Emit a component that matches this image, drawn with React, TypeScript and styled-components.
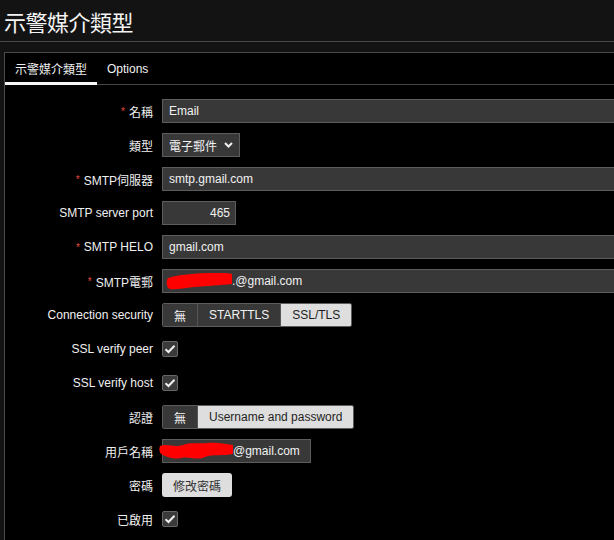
import React from 'react';
import styled, { createGlobalStyle } from 'styled-components';

const GlobalStyle = createGlobalStyle`
  html, body {
    margin: 0;
    background: #131313;
    overflow: hidden;
  }
  body {
    font-family: "Liberation Sans", Arial, "Noto Sans CJK TC", sans-serif;
    font-size: 12px;
    color: #f2f2f2;
  }
`;

const Header = styled.header`
  height: 41px;
  border-bottom: 1px solid #474747;
  display: flex;
  align-items: center;
  padding-left: 4px;
`;

const Title = styled.h1`
  margin: 0;
  font-size: 22px;
  font-weight: 400;
  color: #f4f4f4;
  font-family: "Noto Sans CJK TC", "Liberation Sans", sans-serif;
  letter-spacing: -0.5px;
`;

const Wrap = styled.div`
  padding: 10px 0 0 4px;
`;

const Panel = styled.section`
  height: calc(100vh - 53px);
  overflow: hidden;
  background: #000;
  border-top: 1px solid #4a4a4a;
  border-left: 1px solid #4a4a4a;
`;

const Tabs = styled.nav`
  display: flex;
  height: 31px;
  border-bottom: 1px solid #444;
`;

const Tab = styled.div<{ $active?: boolean }>`
  display: flex;
  align-items: center;
  padding: 2px 10px 0;
  margin-bottom: -1px;
  border-bottom: 3px solid ${p => (p.$active ? '#f5f5f5' : 'transparent')};
  color: #f2f2f2;
  font-size: 12px;
`;

const Form = styled.div`
  display: grid;
  grid-template-columns: 148px 1fr;
  column-gap: 9px;
  row-gap: 10px;
  padding-top: 14px;
  grid-auto-rows: 24px;
`;

const Label = styled.label`
  display: flex;
  align-items: center;
  justify-content: flex-end;
  white-space: nowrap;
  color: #f0f0f0;
`;

const Star = styled.span`
  color: #e5483d;
  font-size: 10px;
  margin-right: 4px;
`;

const Cell = styled.div`
  display: flex;
  align-items: center;
  min-width: 0;
`;

const Field = styled.div<{ $width?: number; $right?: boolean }>`
  box-sizing: border-box;
  flex: none;
  height: 24px;
  width: ${p => (p.$width ? `${p.$width}px` : '500px')};
  background: #383838;
  border: 1px solid #5c5c5c;
  display: flex;
  align-items: center;
  justify-content: ${p => (p.$right ? 'flex-end' : 'flex-start')};
  padding: 0 ${p => (p.$right ? '5px' : '6px')};
  color: #f2f2f2;
  font-size: 12px;
  white-space: nowrap;
`;

const Select = styled(Field)`
  padding-right: 6px;
  justify-content: space-between;
`;

const Segments = styled.div`
  display: flex;
  height: 24px;
  box-sizing: border-box;
  border: 1px solid #5c5c5c;
  border-radius: 2px;
  overflow: hidden;
`;

const Segment = styled.div<{ $on?: boolean }>`
  display: flex;
  align-items: center;
  padding: 0 11px;
  background: ${p => (p.$on ? '#dedede' : '#383838')};
  color: ${p => (p.$on ? '#1e1e1e' : '#f2f2f2')};
  & + & {
    border-left: 1px solid #555;
  }
`;

const Check = styled.div`
  width: 16px;
  height: 16px;
  box-sizing: border-box;
  background: #3a3a3a;
  border: 1px solid #666;
  border-radius: 2px;
  display: flex;
  align-items: center;
  justify-content: center;
`;

const Button = styled.div`
  height: 24px;
  display: flex;
  align-items: center;
  padding: 0 11px;
  background: #dedede;
  color: #333;
  border-radius: 3px;
`;

const Redact = styled.svg<{ $shift?: number }>`
  flex: none;
  margin-left: ${p => p.$shift ?? 0}px;
`;

const Tick = () => (
  <svg width="12" height="10" viewBox="0 0 12 10">
    <path d="M1.5 5.2 L4.5 8 L10.5 1.8" fill="none" stroke="#f0f0f0" strokeWidth="2" />
  </svg>
);

const Chevron = () => (
  <svg width="9" height="6" viewBox="0 0 9 6">
    <path d="M1 1 L4.5 4.5 L8 1" fill="none" stroke="#f0f0f0" strokeWidth="2" />
  </svg>
);

const Required = ({ children }: { children: React.ReactNode }) => (
  <Label>
    <Star>*</Star>
    {children}
  </Label>
);

const App: React.FC = () => {
  return (
    <>
      <GlobalStyle />
      <Header>
        <Title>示警媒介類型</Title>
      </Header>
      <Wrap>
        <Panel>
          <Tabs>
            <Tab $active>示警媒介類型</Tab>
            <Tab>Options</Tab>
          </Tabs>
          <Form>
            <Required>名稱</Required>
            <Cell>
              <Field>Email</Field>
            </Cell>

            <Label>類型</Label>
            <Cell>
              <Select $width={78}>
                電子郵件
                <Chevron />
              </Select>
            </Cell>

            <Required>SMTP伺服器</Required>
            <Cell>
              <Field>smtp.gmail.com</Field>
            </Cell>

            <Label>SMTP server port</Label>
            <Cell>
              <Field $width={74} $right>465</Field>
            </Cell>

            <Required>SMTP HELO</Required>
            <Cell>
              <Field>gmail.com</Field>
            </Cell>

            <Required>SMTP電郵</Required>
            <Cell>
              <Field>
                <Redact width="66" height="20" viewBox="0 0 66 20" $shift={-3}>
                  <path
                    d="M2 7 C10 4 30 2 50 2 C58 2 64 2 66 3 L66 13 C56 14 40 15 28 16 C18 17 10 19 4 18 C0 17 0 10 2 7 Z"
                    fill="#ff0000"
                  />
                </Redact>
                .@gmail.com
              </Field>
            </Cell>

            <Label>Connection security</Label>
            <Cell>
              <Segments>
                <Segment>無</Segment>
                <Segment>STARTTLS</Segment>
                <Segment $on>SSL/TLS</Segment>
              </Segments>
            </Cell>

            <Label>SSL verify peer</Label>
            <Cell>
              <Check>
                <Tick />
              </Check>
            </Cell>

            <Label>SSL verify host</Label>
            <Cell>
              <Check>
                <Tick />
              </Check>
            </Cell>

            <Label>認證</Label>
            <Cell>
              <Segments>
                <Segment>無</Segment>
                <Segment $on>Username and password</Segment>
              </Segments>
            </Cell>

            <Label>用戶名稱</Label>
            <Cell>
              <Field $width={149}>
                <Redact width="74" height="22" viewBox="0 0 74 22" $shift={-10}>
                  <path
                    d="M1 6 C8 3 16 8 24 5 C32 2 40 4 48 3 C58 2 66 4 74 5 L74 14 C64 16 54 14 46 17 C38 21 30 16 22 18 C14 20 6 16 2 14 C0 12 0 8 1 6 Z"
                    fill="#ff0000"
                  />
                </Redact>
                @gmail.com
              </Field>
            </Cell>

            <Label>密碼</Label>
            <Cell>
              <Button>修改密碼</Button>
            </Cell>

            <Label>已啟用</Label>
            <Cell>
              <Check>
                <Tick />
              </Check>
            </Cell>
          </Form>
        </Panel>
      </Wrap>
    </>
  );
};

export default App;
